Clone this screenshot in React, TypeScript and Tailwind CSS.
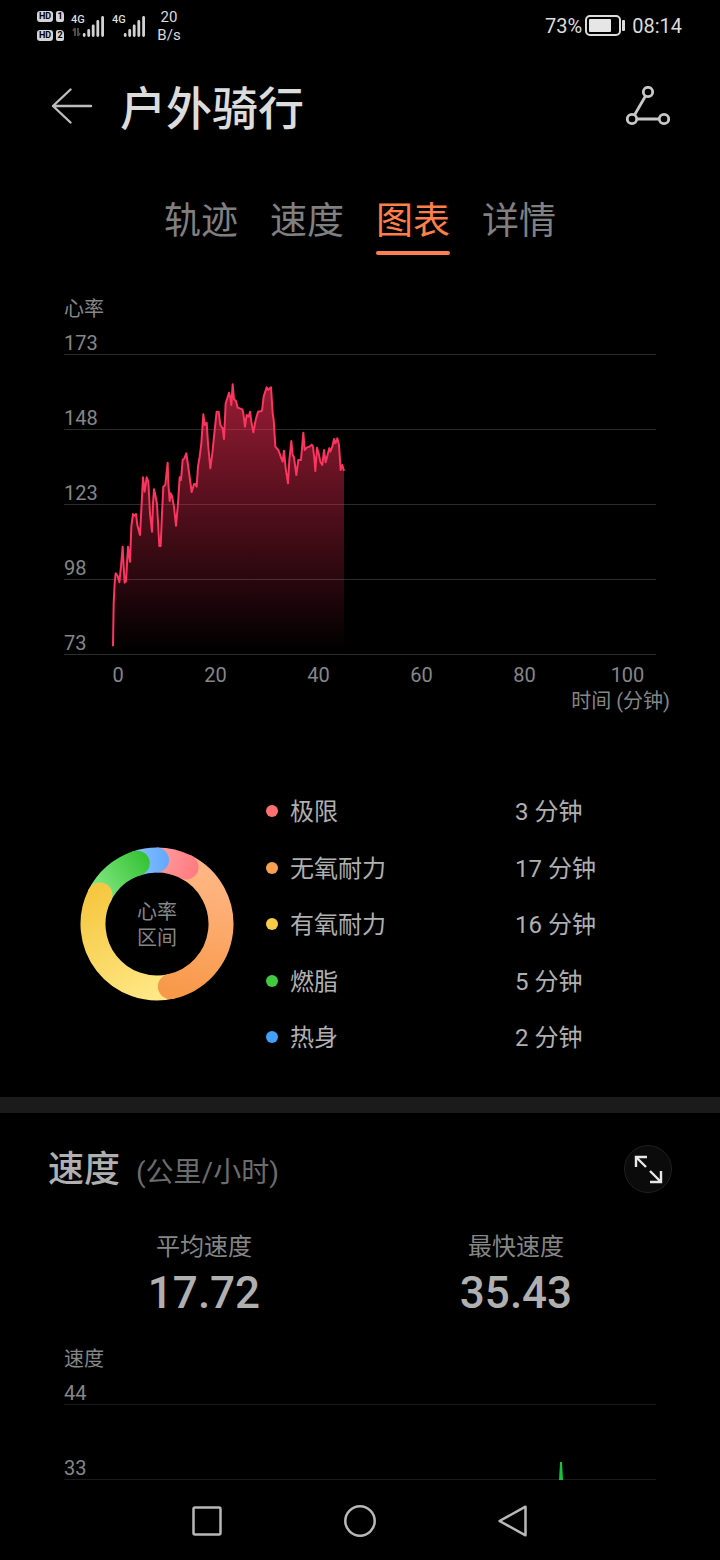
import type { ReactNode } from "react";

const tabs = ["轨迹", "速度", "图表", "详情"];

const zones = [
  { name: "极限", minutes: 3, dot: "bg-[#ff7070]" },
  { name: "无氧耐力", minutes: 17, dot: "bg-[#fa9f52]" },
  { name: "有氧耐力", minutes: 16, dot: "bg-[#f7cb45]" },
  { name: "燃脂", minutes: 5, dot: "bg-[#41c93f]" },
  { name: "热身", minutes: 2, dot: "bg-[#439ffa]" },
];

const minuteTicks = [20, 40, 60, 80, 100];

// Heart rate trace, three units per pixel
const heartTrace =
  "39,826 41,697 44,637 47,607 53,615 58,634 63,587 68,527 71,587 74,635 78,631 84,527 90,572 94,467 99,429 103,434 108,429 112,462 120,492 125,397 129,319 134,362 140,319 145,332 150,427 156,482 159,397 162,355 166,372 171,399 178,525 182,525 186,427 190,347 196,342 203,275 205,337 209,390 212,367 216,375 222,407 228,464 234,397 239,319 243,327 248,267 253,262 259,247 264,282 275,363 282,340 286,339 290,347 294,287 299,257 304,217 310,130 314,162 320,155 324,217 331,292 337,247 343,187 350,122 356,122 361,162 368,172 372,204 377,97 382,82 387,65 391,79 394,102 398,40 402,85 408,90 413,110 427,115 430,127 435,167 440,132 446,137 450,122 454,152 460,184 467,147 474,122 486,120 491,77 500,49 505,57 509,52 513,49 518,127 521,147 526,227 535,237 543,259 548,272 552,239 557,292 564,337 568,267 574,210 578,252 582,259 589,312 595,267 603,267 610,185 614,237 620,230 628,227 635,221 639,227 643,262 646,300 651,230 656,247 661,272 667,282 672,237 677,274 684,247 688,232 691,242 697,227 702,204 706,217 712,202 717,222 722,297 727,282 732,300";

function HdBadge({ slot }: { slot: string }) {
  return (
    <div className="flex gap-[3px] text-[9px] leading-[11px] font-bold text-black">
      <span className="w-4 rounded-[3px] bg-[#d4d4d4] text-center">HD</span>
      <span className="w-2 rounded-[2px] rounded-tr-[4px] bg-[#d4d4d4] text-center">{slot}</span>
    </div>
  );
}

function Signal({ active }: { active?: boolean }) {
  return (
    <div className="relative h-6 w-[34px]">
      <span className="absolute top-0 left-0 text-[11px] leading-3 font-medium">4G</span>
      <svg className="h-6 w-[34px]" viewBox="0 0 34 24" fill="none">
        {active && (
          <path d="M4 14v8M2 17L4 14M7 22v-8M7 22l2-3" stroke="#4a4a4a" strokeWidth="2" />
        )}
        <path
          d="M13.200 20.500v1M17.700 16.500v5M22.200 12v9.500M26.800 7.500v14M31.600 3.500v18"
          stroke="#d2d2d2"
          strokeWidth="2.800"
          strokeLinecap="round"
        />
      </svg>
    </div>
  );
}

function StatusBar() {
  return (
    <div className="flex h-[52px] items-center justify-between pr-[38px] pl-[37px] text-[#dcdcdc]">
      <div className="flex items-center">
        <div className="flex flex-col gap-2">
          <HdBadge slot="1" />
          <HdBadge slot="2" />
        </div>
        <div className="ml-[7px] flex gap-[7px]">
          <Signal active />
          <Signal />
        </div>
        <div className="ml-[7px] flex w-8 flex-col text-center text-[15px] leading-[18px]">
          <span>20</span>
          <span>B/s</span>
        </div>
      </div>
      <div className="flex items-center text-[20px] leading-8">
        <span>73%</span>
        <svg className="mr-1 ml-[3px] h-[22px] w-10" viewBox="0 0 40 22" fill="none">
          <rect x="1" y="1" width="34" height="19" rx="4" stroke="#dcdcdc" strokeWidth="2" />
          <rect x="4" y="4" width="22" height="13" rx="1" fill="#e6e6e6" />
          <rect x="37" y="5" width="3" height="11" rx="1" fill="#dcdcdc" />
        </svg>
        <span className="ml-[3px]">08:14</span>
      </div>
    </div>
  );
}

function Header() {
  return (
    <header className="flex h-28 items-center pr-[50px] pl-[51px]">
      <button aria-label="返回">
        <svg className="h-10 w-[42px]" viewBox="0 0 42 40" fill="none" stroke="#bdbdbd" strokeWidth="2.400">
          <path d="M2 18H40M19.500 1.500L2 18L19.500 34.500" strokeLinecap="round" strokeLinejoin="round" />
        </svg>
      </button>
      <h1 className="ml-[27px] pt-0.5 text-[46px] leading-[60px] font-medium text-[#dcdcdc]">户外骑行</h1>
      <button className="ml-auto" aria-label="轨迹分享">
        <svg className="h-11 w-11" viewBox="0 0 44 44" fill="none" stroke="#c8c8c8" strokeWidth="2.800">
          <circle cx="22" cy="6" r="4.700" />
          <circle cx="6" cy="33" r="4.700" />
          <circle cx="38" cy="33" r="4.700" />
          <path d="M19.500 10L8.500 29M11 33H33" />
        </svg>
      </button>
    </header>
  );
}

function GridRow({ value, first, dim }: { value: number; first?: boolean; dim?: boolean }) {
  return (
    <div
      className={`flex items-end border-b leading-[22px] ${first ? "h-[34px]" : "h-[75px]"} ${
        dim ? "border-[#1a1a1a]" : "border-[#2c2c2c]"
      }`}
    >
      {value}
    </div>
  );
}

function Chart({ title, values, dim, children }: { title: string; values: number[]; dim?: boolean; children: ReactNode }) {
  return (
    <div className="mx-16 text-[20px] text-[#868686]">
      <h3 className="leading-6">{title}</h3>
      <div className="relative">
        {values.map((v, i) => (
          <GridRow key={v} value={v} first={i === 0} dim={dim} />
        ))}
        {children}
      </div>
    </div>
  );
}

function HeartRate() {
  return (
    <section className="pt-[42px]">
      <Chart title="心率" values={[173, 148, 123, 98, 73]}>
        <svg
          className="absolute bottom-0 left-0 h-[300px] w-full"
          viewBox="-108 -48 1776 900"
          preserveAspectRatio="none"
          fill="none"
        >
          <defs>
            <linearGradient id="heart" gradientUnits="userSpaceOnUse" x1="0" y1="43" x2="0" y2="840">
              <stop offset="0" stopColor="#ff2e56" stopOpacity="0.600" />
              <stop offset="1" stopColor="#ff2e56" stopOpacity="0" />
            </linearGradient>
          </defs>
          <polygon points={`39,850 ${heartTrace} 732,850`} fill="url(#heart)" />
          <polyline
            points={heartTrace}
            stroke="#fc3560"
            strokeWidth="2"
            strokeLinejoin="round"
            vectorEffect="non-scaling-stroke"
          />
        </svg>
      </Chart>
      <div className="mt-2 mr-[41px] ml-[61px] grid grid-cols-6 text-center text-[20px] leading-6 text-[#868686]">
        <span className="pl-[50%] text-left">0</span>
        {minuteTicks.map((m) => (
          <span key={m}>{m}</span>
        ))}
      </div>
      <p className="pt-0.5 pr-[50px] text-right text-[20px] leading-6 text-[#868686]">时间 (分钟)</p>
    </section>
  );
}

// Angles run clockwise from the top
const arcs = [
  { id: "warm", from: 341, to: 360, start: "#86c0ff", end: "#62a8fb" },
  { id: "fat", from: 296, to: 342, start: "#83e783", end: "#36c234" },
  { id: "aerobic", from: 167, to: 297, start: "#ffe886", end: "#f6c842" },
  { id: "anaerobic", from: 26, to: 168, start: "#ffb684", end: "#f8994a" },
  { id: "limit", from: 0, to: 27, start: "#ff9c9c", end: "#ff7a80" },
];

function point(angle: number) {
  const a = (angle * Math.PI) / 180;
  return { x: 77 + 64 * Math.sin(a), y: 77 - 64 * Math.cos(a) };
}

function Donut() {
  return (
    <div className="relative h-[154px] w-[154px] shrink-0">
      <svg className="h-full w-full" viewBox="0 0 154 154" fill="none">
        {arcs.map((arc) => {
          const a = point(arc.from);
          const b = point(arc.to);
          const tip = point(arc.to + 11);
          return (
            <g key={arc.id}>
              <linearGradient id={arc.id} gradientUnits="userSpaceOnUse" x1={a.x} y1={a.y} x2={tip.x} y2={tip.y}>
                <stop stopColor={arc.start} />
                <stop offset="1" stopColor={arc.end} />
              </linearGradient>
              <path d={`M${a.x} ${a.y}A64 64 0 0 1 ${b.x} ${b.y}`} stroke={`url(#${arc.id})`} strokeWidth="25" />
              {arc.id !== "warm" && <circle cx={b.x} cy={b.y} r="12.500" fill={`url(#${arc.id})`} />}
            </g>
          );
        })}
        {/* rounded end of the warm-up arc, above its neighbour */}
        <path d="M76.500 .500a12.500 12.500 0 0 1 0 25z" fill="url(#warm)" />
      </svg>
      <div className="absolute inset-0 flex flex-col items-center justify-center pt-0.5 text-[20px] leading-[26px] text-[#868686]">
        <span>心率</span>
        <span>区间</span>
      </div>
    </div>
  );
}

function Zones() {
  return (
    <section className="flex items-center pt-[82px] pr-16 pb-11 pl-20">
      <Donut />
      <ul className="ml-8 flex h-[258px] flex-1 flex-col justify-between text-[24px] leading-[30px] text-[#b0b0b0]">
        {zones.map((z) => (
          <li key={z.name} className="flex items-center">
            <span className={`h-3 w-3 rounded-full ${z.dot}`} />
            <span className="ml-3 flex-1 pt-0.5">{z.name}</span>
            <span className="w-[141px] pt-0.5">{z.minutes} 分钟</span>
          </li>
        ))}
      </ul>
    </section>
  );
}

function Stat({ label, value }: { label: string; value: string }) {
  return (
    <div>
      <div className="text-[24px] leading-8 text-[#868686]">{label}</div>
      <div className="text-[44px] leading-[60px] font-medium text-[#b0b0b0]">{value}</div>
    </div>
  );
}

function Speed() {
  return (
    <section className="border-t-[16px] border-[#1b1b1b] pt-8">
      <div className="flex h-12 items-end justify-between px-12">
        <h2 className="flex items-baseline gap-4 text-[36px] leading-10 font-medium text-[#b0b0b0]">
          速度
          <span className="text-[28px] font-normal text-[#6c6c6c]">(公里/小时)</span>
        </h2>
        <button className="h-12 w-12 rounded-full border border-[#202020] bg-[#0b0b0b]" aria-label="全屏">
          <svg className="h-full w-full" viewBox="1 1 46 46" fill="none" stroke="#e8e8e8" strokeWidth="2.400">
            <path d="M12 22V12H23M12 12L22 22M37 26V37H26M37 37L26 26" />
          </svg>
        </button>
      </div>
      <div className="grid grid-cols-2 px-12 pt-[38px] pb-6 text-center">
        <Stat label="平均速度" value="17.72" />
        <Stat label="最快速度" value="35.43" />
      </div>
      <Chart title="速度" values={[44, 33]} dim>
        <svg
          className="absolute bottom-0 left-0 h-[75px] w-full"
          viewBox="0 0 592 75"
          preserveAspectRatio="none"
        >
          <path d="M495 75L496 57H498L499 75Z" fill="#14c43a" />
        </svg>
      </Chart>
    </section>
  );
}

function NavBar() {
  return (
    <nav className="grid h-[79px] grid-cols-3 place-items-center px-[130px]">
      <button aria-label="最近任务">
        <svg className="h-8 w-8" viewBox="0 0 32 32" fill="none" stroke="#b8b8b8" strokeWidth="2.500">
          <rect x="2.500" y="2.500" width="27" height="27" rx="1.500" />
        </svg>
      </button>
      <button aria-label="主屏幕">
        <svg className="h-8 w-8" viewBox="0 0 32 32" fill="none" stroke="#b8b8b8" strokeWidth="2.500">
          <circle cx="16" cy="16" r="14.700" />
        </svg>
      </button>
      <button aria-label="后退">
        <svg className="h-8 w-8" viewBox="0 0 32 32" fill="none" stroke="#b8b8b8" strokeWidth="2.500">
          <path d="M28.500 1.700V30.300L2.500 16Z" strokeLinejoin="round" />
        </svg>
      </button>
    </nav>
  );
}

export default function App() {
  return (
    <div className="flex min-h-screen flex-col bg-black font-[Roboto,'Noto_Sans_CJK_SC',sans-serif]">
      <StatusBar />
      <Header />
      <div className="flex justify-center gap-8 pt-[31px] text-[37px] leading-[54px] text-[#808080]">
        {tabs.map((t) => (
          <button key={t} className="relative pb-1.5">
            <span className={t === "图表" ? "text-[#ff7f4a]" : ""}>{t}</span>
            {t === "图表" && <span className="absolute bottom-0 left-0 h-1 w-full rounded-full bg-[#fb7f51]" />}
          </button>
        ))}
      </div>
      <main className="flex-1">
        <HeartRate />
        <Zones />
        <Speed />
      </main>
      <NavBar />
    </div>
  );
}
